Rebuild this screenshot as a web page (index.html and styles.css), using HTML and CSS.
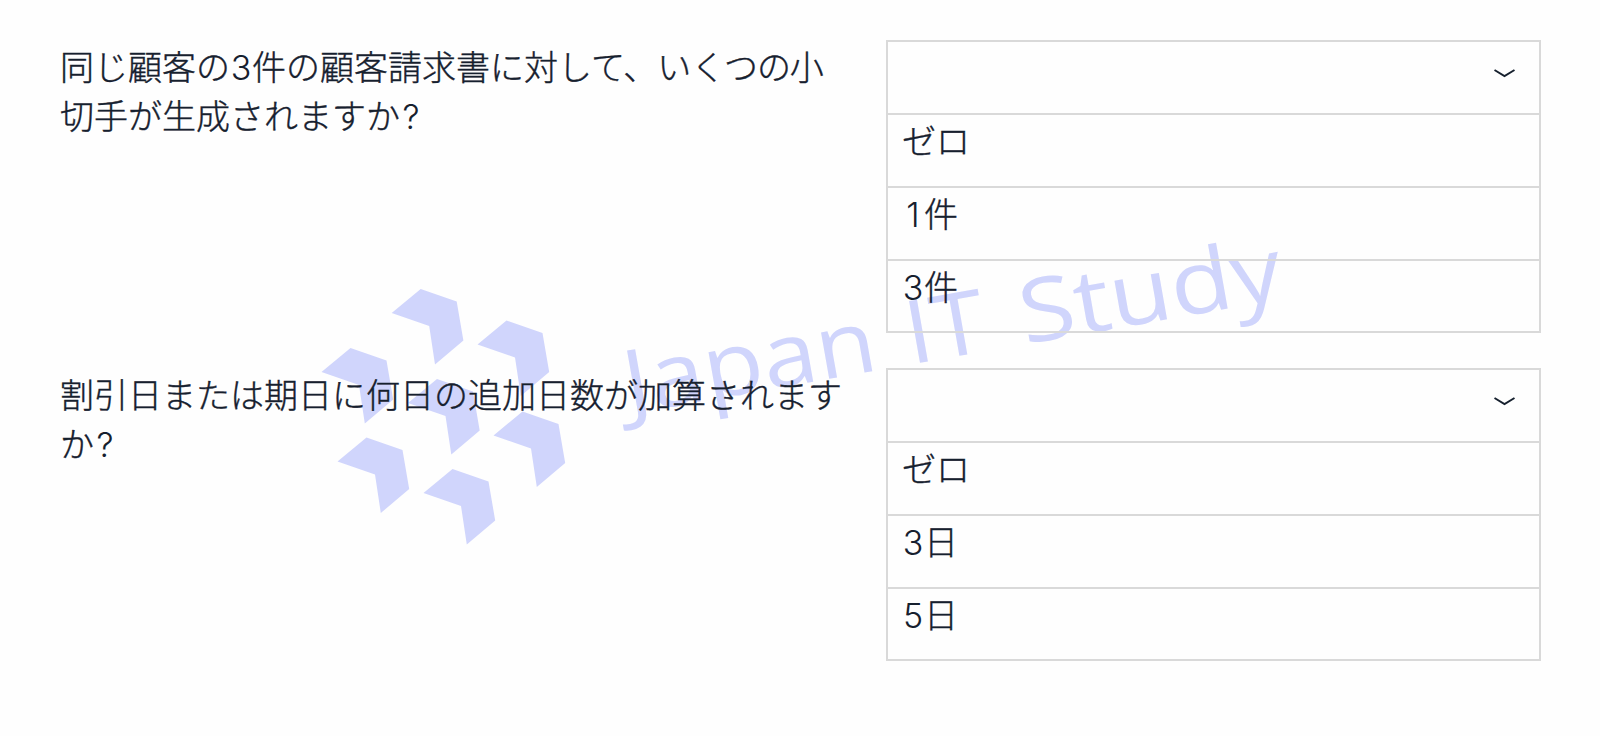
FILE: index.html
```
<!DOCTYPE html>
<html lang="ja">
<head>
  <meta charset="utf-8">
  <title>Japan IT Study</title>
  <meta name="viewport" content="width=device-width, initial-scale=1">
  <link rel="stylesheet" href="styles.css">
</head>

<body>
  <svg class="watermark" viewBox="0 0 1600 736" aria-hidden="true">
    <defs>
      <path id="chevron" d="M0 0L36 12.5L42.7 51.5L14.3 75.5L8.5 37L-29 24Z" />
    </defs>
    <use href="#chevron" x="420.7" y="289" />
    <use href="#chevron" x="506.5" y="320.5" />
    <use href="#chevron" x="350.5" y="348" />
    <use href="#chevron" x="437" y="379" />
    <use href="#chevron" x="522.5" y="411.5" />
    <use href="#chevron" x="366.5" y="437.5" />
    <use href="#chevron" x="452.5" y="469" />
    <g transform="translate(635 413) rotate(-10)">
      <text x="-6" y="0" textLength="255" lengthAdjust="spacingAndGlyphs">Japan</text>
      <text x="280" y="0" textLength="80" lengthAdjust="spacingAndGlyphs">IT</text>
      <text x="396" y="0" textLength="265" lengthAdjust="spacingAndGlyphs">Study</text>
    </g>
  </svg>

  <div class="questions">
    <div class="question">
      <div class="question-text">同じ顧客の<span class="num">3</span>件の顧客請求書に対して、い<span class="tight">くつの</span>小<br>切手が生成されますか<span class="num">?</span></div>
      <div class="dropdown">
        <div class="selected">
          <svg class="arrow" viewBox="0 0 22 10"><path d="M0.5 1L10.5 7L20.5 1" /></svg>
        </div>
        <div class="option">ゼロ</div>
        <div class="option"><span class="num">1</span>件</div>
        <div class="option"><span class="num">3</span>件</div>
      </div>
    </div>
    <div class="question">
      <div class="question-text">割引日または期日に何日の追加日数が加算されます<br>か<span class="num">?</span></div>
      <div class="dropdown">
        <div class="selected">
          <svg class="arrow" viewBox="0 0 22 10"><path d="M0.5 1L10.5 7L20.5 1" /></svg>
        </div>
        <div class="option">ゼロ</div>
        <div class="option"><span class="num">3</span>日</div>
        <div class="option"><span class="num">5</span>日</div>
      </div>
    </div>
  </div>
</body>
</html>
```
FILE: styles.css
```
* {
  box-sizing: border-box;
}
body {
  margin: 0;
  background-color: #fefefe;
  color: #16202e;
  font-family: Inter, "Noto Sans CJK JP", sans-serif;
  font-size: 34px;
  font-weight: 300;
  line-height: 49px;
  -webkit-text-stroke: 0.4px #16202e;
}
.watermark {
  position: absolute;
  top: 0;
  left: 0;
  width: 1600px;
  height: 736px;
  fill: #d0d5fc;
  font-family: "Open Sans", sans-serif;
  font-size: 88px;
  font-weight: 500;
  -webkit-text-stroke: 0;
}
.questions {
  position: relative;
  display: flex;
  flex-direction: column;
  gap: 35px;
  padding: 40px 59px 0 60px;
}
.question {
  display: flex;
  justify-content: space-between;
}
.question-text {
  padding-top: 3px;
  white-space: nowrap;
}
.tight {
  letter-spacing: -1.2px;
}
.num {
  display: inline-block;
  width: 22px;
  text-align: center;
  -webkit-text-stroke: 0;
}
.dropdown {
  width: 655px;
  height: 293px;
  border: 2px solid #d9d9d9;
}
.selected,
.option {
  height: 73px;
  border-bottom: 2px solid #d9d9d9;
}
.selected {
  display: flex;
  justify-content: flex-end;
  padding: 27px 23px 0 0;
}
.option {
  padding: 2px 0 0 14px;
}
.option:last-child {
  height: 70px;
  border-bottom: none;
}
.arrow {
  width: 22px;
  height: 10px;
  fill: none;
  stroke: #16202e;
  stroke-width: 2;
}
```
